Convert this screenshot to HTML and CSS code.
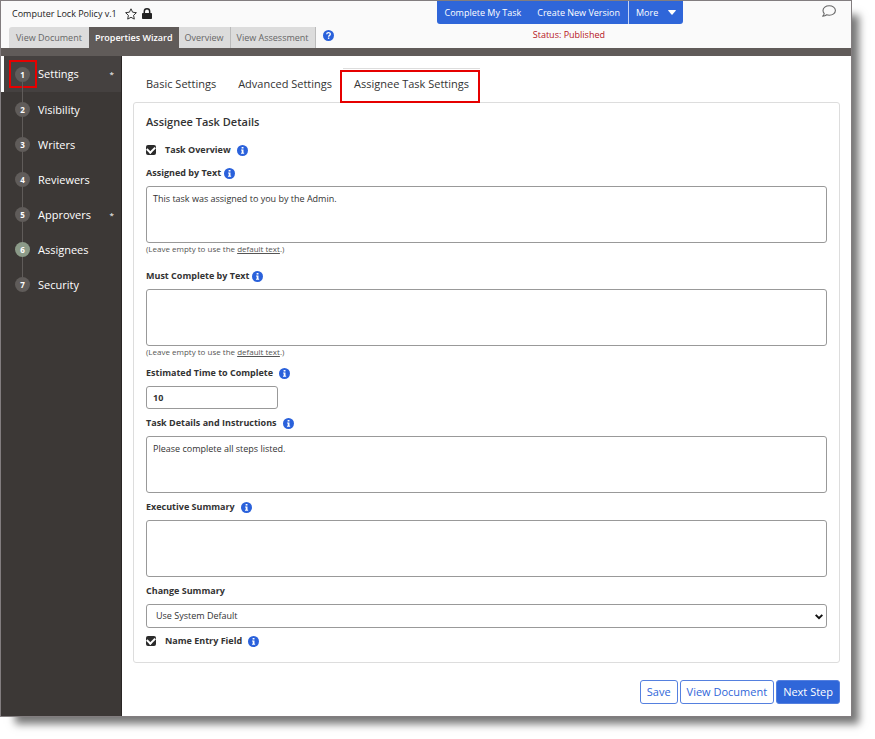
FILE: index.html
```html
<!DOCTYPE html>
<html lang="en">
<head>
    <meta charset="utf-8">
    <title>Computer Lock Policy v.1 - Properties Wizard</title>
    <link rel="stylesheet" href="styles.css">
</head>
<body>
    <!-- Shared icons -->
    <svg class="icon-defs" aria-hidden="true">
        <symbol id="icon-info" viewBox="0 0 10 10">
            <circle cx="5" cy="5" r="5" fill="#2a61db"/>
            <path d="M4.2 1.8h1.7v1.4H4.2zM3.7 4h2.2v3h.6v1H3.6V7h.7V5h-.6z" fill="#fff"/>
        </symbol>
    </svg>

    <div class="window">
        <!-- Top header -->
        <header class="header">
            <div class="header-left">
                <div class="title-row">
                    <h1 class="title">Computer Lock Policy v.1</h1>
                    <button class="icon-button" type="button" aria-label="Favorite">
                        <svg width="12" height="12" viewBox="0 0 12 12" fill="none" stroke="#333" stroke-linejoin="round"><path d="M6 .8l1.6 3.4 3.8.5-2.8 2.6.7 3.8L6 9.3l-3.3 1.8.7-3.8L.6 4.7l3.8-.5z"/></svg>
                    </button>
                    <svg width="10" height="12" viewBox="0 0 10 12"><path d="M0 5.8Q0 5 .8 5h8.4q.8 0 .8.8v4.400q0 .8-.8.8H.8Q0 11 0 10.200z" fill="#222"/><path d="M2.300 5.500V3.500a2.700 2.700 0 0 1 5.400 0v2" fill="none" stroke="#222" stroke-width="1.500"/></svg>
                </div>
                <nav class="doc-tabs">
                    <a class="doc-tab" href="#">View Document</a>
                    <a class="doc-tab active" href="#">Properties Wizard</a>
                    <a class="doc-tab" href="#">Overview</a>
                    <a class="doc-tab" href="#">View Assessment</a>
                    <button class="icon-button help" type="button" aria-label="Help">
                        <svg width="11" height="11" viewBox="0 0 11 11"><circle cx="5.500" cy="5.500" r="5.500" fill="#2a61db"/><path d="M3.700 4.200c.1-2.300 3.700-2.100 3.600 0 0 1.200-1.700 1.200-1.700 2.500" fill="none" stroke="#fff" stroke-width="1.300"/><path d="M4.900 7.500h1.400v1.400H4.900z" fill="#fff"/></svg>
                    </button>
                </nav>
            </div>
            <div class="header-actions">
                <div class="action-bar">
                    <button class="action" type="button">Complete My Task</button>
                    <button class="action" type="button">Create New Version</button>
                    <button class="action more" type="button">More
                        <svg width="8" height="5" viewBox="0 0 8 5"><path d="M.5 0h7q.6.300.2.800L4.500 4.400q-.5.500-1 0L.3.800Q-.1.300.5 0z" fill="#fff"/></svg>
                    </button>
                </div>
                <div class="status">Status: Published</div>
            </div>
            <button class="icon-button comment" type="button" aria-label="Comments">
                <svg width="14" height="13" viewBox="0 0 14 13" fill="none" stroke="#666" stroke-width="1.100" stroke-linejoin="round"><path d="M7.200.8c3.500 0 6.200 2.100 6.200 4.700s-2.700 4.700-6.200 4.700c-.9 0-1.700-.1-2.500-.4-1 .8-2.300 1.300-4 1.400.8-.8 1.400-1.600 1.500-2.700C1.400 7.700 1 6.700 1 5.500 1 2.900 3.700.8 7.200.8z"/></svg>
            </button>
        </header>

        <div class="main">
            <!-- Wizard steps -->
            <nav class="sidebar">
                <a class="step active" href="#">
                    <span class="step-number">1<span class="highlight"></span></span>
                    <span class="step-name">Settings</span>
                    <span class="step-required">*</span>
                </a>
                <a class="step" href="#"><span class="step-number">2</span><span class="step-name">Visibility</span></a>
                <a class="step" href="#"><span class="step-number">3</span><span class="step-name">Writers</span></a>
                <a class="step" href="#"><span class="step-number">4</span><span class="step-name">Reviewers</span></a>
                <a class="step" href="#">
                    <span class="step-number">5</span>
                    <span class="step-name">Approvers</span>
                    <span class="step-required">*</span>
                </a>
                <a class="step" href="#"><span class="step-number current">6</span><span class="step-name">Assignees</span></a>
                <a class="step" href="#"><span class="step-number">7</span><span class="step-name">Security</span></a>
            </nav>

            <!-- Settings form -->
            <main class="content">
                <nav class="settings-tabs">
                    <a class="settings-tab" href="#">Basic Settings</a>
                    <a class="settings-tab" href="#">Advanced Settings</a>
                    <a class="settings-tab active" href="#">Assignee Task Settings<span class="highlight"></span></a>
                </nav>

                <form class="panel">
                    <h2 class="panel-title">Assignee Task Details</h2>

                    <div class="check-row">
                        <input class="checkbox" type="checkbox" id="taskOverview" checked>
                        <label for="taskOverview">Task Overview</label>
                        <svg class="info"><use href="#icon-info"/></svg>
                    </div>

                    <div class="label-row close">
                        <label for="assignedBy">Assigned by Text</label>
                        <svg class="info"><use href="#icon-info"/></svg>
                    </div>
                    <textarea class="field area" id="assignedBy">This task was assigned to you by the Admin.</textarea>
                    <p class="hint spaced">(Leave empty to use the <a href="#">default text</a>.)</p>

                    <div class="label-row close">
                        <label for="completeBy">Must Complete by Text</label>
                        <svg class="info"><use href="#icon-info"/></svg>
                    </div>
                    <textarea class="field area" id="completeBy"></textarea>
                    <p class="hint">(Leave empty to use the <a href="#">default text</a>.)</p>

                    <div class="label-row">
                        <label for="estimatedTime">Estimated Time to Complete</label>
                        <svg class="info"><use href="#icon-info"/></svg>
                    </div>
                    <input class="field time" type="text" id="estimatedTime" value="10">

                    <div class="label-row">
                        <label for="taskDetails">Task Details and Instructions</label>
                        <svg class="info"><use href="#icon-info"/></svg>
                    </div>
                    <textarea class="field area" id="taskDetails">Please complete all steps listed.</textarea>

                    <div class="label-row">
                        <label for="execSummary">Executive Summary</label>
                        <svg class="info"><use href="#icon-info"/></svg>
                    </div>
                    <textarea class="field area" id="execSummary"></textarea>

                    <div class="label-row">
                        <label for="changeSummary">Change Summary</label>
                    </div>
                    <div class="select-wrap">
                        <select class="field select" id="changeSummary">
                            <option>Use System Default</option>
                        </select>
                        <svg class="select-arrow" width="8" height="6" viewBox="0 0 8 6" fill="none" stroke="#111" stroke-width="2"><path d="M.7.900L4 4.200 7.300.9"/></svg>
                    </div>

                    <div class="check-row last">
                        <input class="checkbox" type="checkbox" id="nameEntry" checked>
                        <label for="nameEntry">Name Entry Field</label>
                        <svg class="info"><use href="#icon-info"/></svg>
                    </div>
                </form>

                <div class="footer">
                    <button class="button" type="button">Save</button>
                    <button class="button" type="button">View Document</button>
                    <button class="button primary" type="button">Next Step</button>
                </div>
            </main>
        </div>
    </div>
</body>
</html>
```

FILE: styles.css
```css
* {
    box-sizing: border-box;
}

/* Basic page styling */
body {
    margin: 0;
    padding: 0 23px 23px 0;
    min-height: 100vh;
    display: flex;
    background: #fff;
    color: #333;
    font-family: "Open Sans", "Noto Sans", sans-serif;
    font-size: 9px;
    line-height: 16px;
}

a {
    color: inherit;
    text-decoration: none;
}

button,
input,
textarea,
select {
    font: inherit;
    color: inherit;
}

.icon-defs {
    position: absolute;
    width: 0;
    height: 0;
}

.icon-button {
    display: flex;
    padding: 0;
    border: 0;
    background: none;
}

/* Window frame */
.window {
    flex: 1;
    display: flex;
    flex-direction: column;
    border: 1px solid #827d7f;
    background: #fff;
    box-shadow: 11px 11px 8px -4px #777;
}

/* Header */
.header {
    display: flex;
    background: #fafafa;
    border-bottom: 8px solid #605b59;
}

.header-left {
    width: 51%;
    padding-left: 8px;
}

.title-row {
    display: flex;
    align-items: center;
    gap: 5px;
    height: 26px;
    padding: 0 0 1px 3px;
}

.title {
    margin: 0 3px 0 0;
    font-size: 9px;
    font-weight: 500;
    color: #222;
}

.doc-tabs {
    display: flex;
}

.doc-tab {
    height: 21px;
    padding: 0 6px;
    line-height: 22px;
    background: #dcdcdc;
    color: #666;
    border-right: 1px solid #bbb;
}

.doc-tab:first-child {
    padding: 0 7px;
    border-radius: 3px 0 0 0;
    border-right: 0;
}

.doc-tab.active {
    background: #605b59;
    color: #fff;
    font-weight: 600;
    border-right: 0;
}

.help {
    margin: 3px 0 0 7px;
}

.header-actions {
    margin-left: 2px;
    text-align: center;
}

.action-bar {
    display: flex;
    height: 23px;
    background: #2f66d9;
    border-radius: 0 0 3px 3px;
}

.action {
    padding: 0 8px;
    border: 0;
    background: none;
    color: #fff;
    font-weight: 500;
}

.action.more {
    display: flex;
    align-items: center;
    gap: 10px;
    padding: 0 7px;
    border-left: 1px solid #c3d2f5;
}

.status {
    padding: 3px 0 0 18px;
    color: #b6151c;
}

.comment {
    margin: 4px 15px 0 auto;
    align-self: flex-start;
}

/* Sidebar and content side by side */
.main {
    flex: 1;
    display: flex;
}

.sidebar {
    width: 121px;
    flex-shrink: 0;
    background: #3c3836;
    border-right: 1px solid #2a2625;
    color: #fff;
    font-size: 11px;
}

.step {
    position: relative;
    display: flex;
    align-items: center;
    height: 35px;
    padding: 0 7px 0 14px;
}

.step.active {
    height: 36px;
    padding-left: 11px;
    border-left: 3px solid #fff;
    background: #454140;
}

.step-number {
    position: relative;
    width: 15px;
    height: 15px;
    margin-right: 8px;
    border-radius: 50%;
    background: #605c5a;
    font-size: 8px;
    font-weight: 700;
    line-height: 15px;
    text-align: center;
}

.step-number.current {
    background: #8b9a88;
}

/* Line that joins a step to the next one */
.step:not(:last-child) .step-number::after {
    content: "";
    position: absolute;
    top: 15px;
    left: 7px;
    width: 1px;
    height: 20px;
    background: #605c5a;
}

.step-required {
    margin-left: auto;
    font-size: 8px;
}

/* Red frame over an item */
.highlight {
    position: absolute;
    inset: -7px -7px -6px -6px;
    border: 2px solid #e60000;
}

.content {
    flex: 1;
    padding: 12px 11px;
}

.settings-tabs {
    display: flex;
    padding-left: 2px;
    font-size: 11px;
}

.settings-tab {
    position: relative;
    height: 34px;
    padding: 0 11px;
    line-height: 30px;
    border-top: 1px solid transparent;
}

.settings-tab.active {
    border-top-color: #ddd;
}

.settings-tab .highlight {
    inset: 1px 0 -1px -3px;
}

.panel {
    display: flex;
    flex-direction: column;
    padding: 11px 12px 12px;
    border: 1px solid #ddd;
    border-radius: 3px;
    font-weight: 700;
}

.panel-title {
    margin: 0 0 12px;
    font-size: 11px;
    font-weight: 600;
}

.check-row,
.label-row {
    display: flex;
    align-items: center;
    gap: 6px;
}

.check-row {
    margin-bottom: 1px;
}

.label-row {
    margin: 6px 0 5px;
}

.label-row.close {
    gap: 3px;
}

.check-row label {
    margin-left: 3px;
}

.check-row.last {
    margin-top: 5px;
}

.checkbox {
    appearance: none;
    display: grid;
    place-items: center;
    width: 10px;
    height: 10px;
    margin: 0;
    border-radius: 2px;
    background: #2b2b2b;
}

.checkbox:checked::before {
    content: "";
    width: 6px;
    height: 4px;
    margin-bottom: 2px;
    border: solid #fff;
    border-width: 0 0 2px 2px;
    transform: rotate(-45deg);
}

.info {
    width: 11px;
    height: 11px;
}

.field {
    width: 100%;
    margin: 0;
    border: 1px solid #999;
    border-radius: 3px;
    background: #fff;
}

.area {
    height: 57px;
    padding: 4px 6px;
    font-weight: 400;
    resize: none;
}

.time {
    width: 132px;
    height: 23px;
    padding: 0 6px;
}

.select-wrap {
    position: relative;
}

.select {
    display: block;
    height: 24px;
    padding: 0 9px;
    appearance: none;
    font-weight: 400;
}

.select-arrow {
    position: absolute;
    top: 10px;
    right: 4px;
    pointer-events: none;
}

.hint {
    margin: 0 0 2px;
    font-size: 8px;
    font-weight: 400;
    line-height: 11px;
    color: #555;
}

.hint.spaced {
    margin-bottom: 8px;
}

.hint a {
    text-decoration: underline;
}

/* Buttons under the panel */
.footer {
    display: flex;
    justify-content: flex-end;
    gap: 2px;
    margin-top: 17px;
}

.button {
    height: 24px;
    padding: 0 6px;
    border: 1px solid #5580df;
    border-radius: 3px;
    background: #fff;
    color: #2f66d9;
    font-size: 11px;
}

.button.primary {
    background: #2f66d9;
    color: #fff;
}
```
